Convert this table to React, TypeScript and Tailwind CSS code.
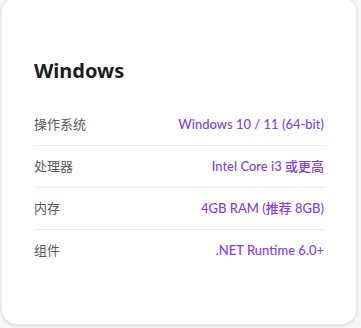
const rows = [
  { label: "操作系统", value: "Windows 10 / 11 (64-bit)" },
  { label: "处理器", value: "Intel Core i3 或更高" },
  { label: "内存", value: "4GB RAM (推荐 8GB)" },
  { label: "组件", value: ".NET Runtime 6.0+" },
]

export default function App() {
  return (
    <div
      className="h-[328px] w-[361px] overflow-hidden bg-[#f6f6f7]"
      style={{ fontFamily: '"Noto Sans", "Noto Sans CJK SC", sans-serif' }}
    >
      <div className="mt-[-4px] ml-px h-[329px] w-[356px] rounded-2xl border border-[#ececee] bg-white px-[32px] pt-[60px] shadow-sm">
        <h3 className="mb-[19px] text-[20px] font-bold leading-7 text-[#1c1c1e]">Windows</h3>
        <div className="flex flex-col">
          {rows.map((row, i) => (
            <div
              key={row.label}
              className={`flex h-[42px] items-center justify-between text-[13px] ${
                i < rows.length - 1 ? "border-b border-[#ebebed]" : ""
              }`}
            >
              <span className="text-[#5a5a5e]">{row.label}</span>
              <span
                className="font-medium text-[#8a3fd1]"
                style={{ fontFamily: 'Lato, "Noto Sans CJK SC", sans-serif' }}
              >
                {row.value}
              </span>
            </div>
          ))}
        </div>
      </div>
    </div>
  )
}
